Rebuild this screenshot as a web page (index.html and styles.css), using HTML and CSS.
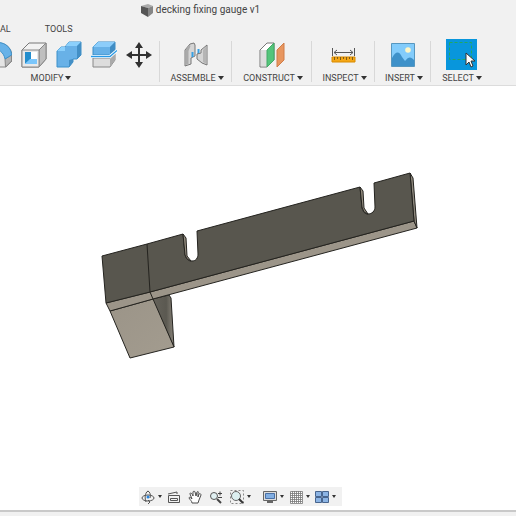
FILE: index.html
```html
<!DOCTYPE html>
<html lang="en">
<head>
<meta charset="utf-8">
<title>decking fixing gauge v1</title>
<link rel="stylesheet" href="styles.css">
</head>
<body>
<header class="header">
  <div class="title">
    <svg width="14" height="14" viewBox="0 0 14 14" aria-hidden="true"><path d="M1 3 8 1l5 2-5 2z" fill="#aaa"/><path d="M1 3l7 2v9l-7-4z" fill="#555"/><path d="M13 3 8 5v9l5-4z" fill="#858585"/></svg>
    <h1>decking fixing gauge v1</h1>
  </div>
  <nav class="tabs"><button>AL</button><button>TOOLS</button></nav>
  <div class="ribbon">
    <section class="group modify">
      <div class="icons">
        <button aria-label="Fillet"><svg width="26" height="28" viewBox="0 0 26 28"><path d="M1 8l8-6h5c8 1 12 7 12 13v5l-6 6H1z" fill="#e4e4e4" stroke="#888"/><path d="M19 18l6.500-4v6l-6 6z" fill="#b4b4b4" stroke="#888"/><path d="M4 7l8-5.500c8 0 13.500 6 13.500 12.500l-6.500 4C18 12 13 7 4 7z" fill="#67b2e8" stroke="#3b91cb"/></svg></button>
        <button aria-label="Shell"><svg width="26" height="28" viewBox="0 0 26 28"><path d="M1 9l7-7h17v16l-7 8H1z" fill="#f2f2f2" stroke="#777"/><path d="M18 9l7-7v16l-7 8z" fill="#bfbfbf" stroke="#888"/><path d="M1 9h17v17H1z" fill="#e9e9e9" stroke="#888"/><path d="M4 11h12v12H4z" fill="#fff"/><path d="M4 11h6v7l-6 5z" fill="#238dcc"/><path d="M4 23l5-5h7v5z" fill="#7bc6fb"/></svg></button>
        <button aria-label="Combine"><svg width="26" height="28" viewBox="0 0 26 28"><path d="M1 10l4-4h4l4-5h12v13l-4 4h-4v3l-4 5H1z" fill="#68b1e7" stroke="#3c91ca"/><path d="M1 10l4-4h4v4zM9 6l4-5h12l-4 4H10z" fill="#8bd0fc"/><path d="M21 5l4-4v13l-4 4zM13 19l4-1v3l-4 5z" fill="#438fc5"/></svg></button>
        <button aria-label="Split body"><svg width="26" height="28" viewBox="0 0 26 28"><path d="M2 17h17l5-6v8l-5 7H2z" fill="#ddd" stroke="#888"/><path d="M19 18l5-6v7l-5 7z" fill="#aaa"/><path d="M2 6l5-5h17v8l-5 5H2z" fill="#67b1e7" stroke="#3b8dc6"/><path d="M2 6l5-5h17l-5 5z" fill="#8ccdfa"/><path d="M19 6l5-5v8l-5 5z" fill="#408dc4"/><path d="M0 15.500h19l7-6" fill="none" stroke="#fff" stroke-width="3"/><path d="M0 15.500h19l7-6" fill="none" stroke="#2799e5" stroke-width="1.300"/></svg></button>
        <button aria-label="Move"><svg width="26" height="28" viewBox="0 0 26 28"><path d="M13 4v20M3 14h20" stroke="#333" stroke-width="2"/><path d="M13 1l4 6H9zM13 27l4-6H9zM0 14l6-4v8zM26 14l-6-4v8z" fill="#303030"/></svg></button>
      </div>
      <button class="label">MODIFY<i class="arrow"></i></button>
    </section>
    <section class="group assemble">
      <div class="icons"><button aria-label="Joint"><svg width="26" height="28" viewBox="0 0 26 28"><path d="M2 9l5-6 4-1 1 2v11l-4 2v6l-6 2z" fill="#d5d5d5" stroke="#777"/><path d="M2.500 9l4-5 1 1-2 5v13l-3 1z" fill="#aaa"/><path d="M9.500 11v5M15.500 8v5" stroke="#36a0e4" stroke-width="2"/><path d="M24 4v20l-5-2-5-4v-5l4-1V9z" fill="#d5d5d5" stroke="#777"/><path d="M20 9l3.500-4v18l-3.500-2z" fill="#b5b5b5"/></svg></button></div>
      <button class="label">ASSEMBLE<i class="arrow"></i></button>
    </section>
    <section class="group construct">
      <div class="icons"><button aria-label="Offset plane"><svg width="26" height="28" viewBox="0 0 26 28"><path d="M1 9l7-7h7v17l-7 7H1z" fill="#fff" stroke="#777"/><path d="M2 9h6v16H2z" fill="#ddd"/><path d="M8 9l7-7v17l-7 7z" fill="#54c57b" stroke="#42a966"/><path d="M18 9l7-7v17l-7 7z" fill="#e8965f" stroke="#d07d48"/></svg></button></div>
      <button class="label">CONSTRUCT<i class="arrow"></i></button>
    </section>
    <section class="group inspect">
      <div class="icons"><button aria-label="Measure"><svg width="26" height="28" viewBox="0 0 26 28"><path d="M1.500 7v8M23.500 7v8M3 11.500h19M6 9l-3 2.500L6 14M19 9l3 2.500-3 2.500" fill="none" stroke="#555"/><path d="M1 16h23v5H1z" fill="#f5a716" stroke="#d98b00"/><path d="M3.500 16v3M6.500 16v2M9.500 16v3M12.500 16v2M15.500 16v3M18.500 16v2M21.500 16v3" stroke="#815d14"/></svg></button></div>
      <button class="label">INSPECT<i class="arrow"></i></button>
    </section>
    <section class="group insert">
      <div class="icons"><button aria-label="Insert image"><svg width="26" height="28" viewBox="0 0 26 28"><path d="M1.500 2.500h23v23h-23z" fill="#83ccfb" stroke="#5797bf"/><path d="M2 17c4-7 7-7 10-1l3 4c4-5 6-4 9-1v6H2z" fill="#3e91c9"/><circle cx="18" cy="9" r="2.800" fill="#fff6c6"/></svg></button></div>
      <button class="label">INSERT<i class="arrow"></i></button>
    </section>
    <section class="group select">
      <div class="icons"><button aria-label="Select"><svg width="31" height="31" viewBox="0 0 31 31"><path d="M0 0h31v31H0z" fill="#0896dc"/><path d="M3.500 3.500h22v17h-22z" fill="none" stroke="#22a860" stroke-dasharray="3 2"/><path d="M20 14v12l3-3 2 5 2-1-2-5h4z" fill="#fff" stroke="#333"/></svg></button></div>
      <button class="label">SELECT<i class="arrow"></i></button>
    </section>
  </div>
</header>
<main class="canvas">
  <svg class="model" width="320" height="192" viewBox="98 170 320 192" role="img" aria-label="Decking fixing gauge">
    <defs>
      <linearGradient id="leg" x2="1" y2="1"><stop stop-color="#9b9488"/><stop offset="1" stop-color="#a39c8f"/></linearGradient>
      <linearGradient id="side"><stop stop-color="#66635b"/><stop offset=".65" stop-color="#5b5951"/><stop offset="1" stop-color="#89847a"/></linearGradient>
    </defs>
    <g stroke="#24231f" stroke-linejoin="round">
      <path d="M152 299l17-4 2 3 3 49z" fill="url(#side)"/>
      <path d="M110 311l43-12 21 48-44 11z" fill="url(#leg)"/>
      <path d="M106 303l44-11 264-71 3 7-264 71-43 12z" fill="#9c9589"/>
      <path d="M410 173l3 5 4 50-3-7z" fill="#8e887d"/>
      <path d="M102 256l45-12 36-10 2 20c1 5 3 7 7 7s6-3 6-7l-1-23 163-44 2 21c1 4 3 6 6 6 4 0 7-3 7-7l-1-24 36-10 4 48-264 71-44 11z" fill="#58564e"/>
      <path d="M183 234l3 4 1 18 4 5-4-2-2-4zM360 187l3 4 1 17 4 6-4-2-2-5z" fill="#928b7e"/>
      <path d="M147 244l3 48 3 7" fill="none"/>
    </g>
  </svg>
  <nav class="view-tools" aria-label="View">
    <button class="menu" aria-label="Orbit"><svg width="14" height="14" viewBox="0 0 14 14"><g fill="none" stroke="#555"><ellipse cx="7" cy="8" rx="6" ry="3"/><path d="M5 12c-2-6 0-10 2-11 2 1 3 4 2 7M5 3l2-2 2 2M7 10l2 2-2 2"/></g><circle cx="7" cy="7" r="1.500" fill="#2985df"/></svg><i class="arrow"></i></button>
    <button aria-label="Look at"><svg width="14" height="14" viewBox="0 0 14 14" fill="none" stroke="#555"><path d="M1.500 5.500h11v7h-11zM3.500 8.500h7v2h-7zM1 4l9-2v2"/></svg></button>
    <button aria-label="Pan"><svg width="14" height="14" viewBox="0 0 14 14"><path d="M4 13c0-2-2-3-3-5 0-1 1-1 3 1L2 4c0-2 2-1 3 2L5 2c0-1 2-1 2 0l1 4 1-4c1-1 2 0 1 1v4l1-3c1-1 2 0 2 1l-2 5-1 3z" fill="#fff" stroke="#4d4d4d"/></svg></button>
    <button aria-label="Zoom"><svg width="14" height="14" viewBox="0 0 14 14"><circle cx="5" cy="6" r="3.500" fill="#e1f0f2" stroke="#555"/><path d="M8 9l4 4" stroke="#444" stroke-width="2"/><path d="M9 3.500h4M11 1.500v4M9 7.500h4" stroke="#444"/></svg></button>
    <button class="menu" aria-label="Fit"><svg width="14" height="14" viewBox="0 0 14 14"><path d="M.5.500h13v13H.5z" fill="none" stroke="#888" stroke-dasharray="2 2"/><circle cx="6" cy="6" r="4.500" fill="#dceff0" stroke="#666"/><path d="M9 9l4 4" stroke="#333" stroke-width="2"/></svg><i class="arrow"></i></button>
    <button class="menu display" aria-label="Display settings"><svg width="14" height="14" viewBox="0 0 14 14"><path d="M.5 1.500h13v9H.5z" fill="#ddd" stroke="#666"/><path d="M2.500 3.500h9v5h-9z" fill="#81aee2" stroke="#4a70a5"/><path d="M4 12h6" stroke="#666" stroke-width="2"/></svg><i class="arrow"></i></button>
    <button class="menu" aria-label="Grid and snaps"><svg width="14" height="14" viewBox="0 0 14 14"><path d="M1.500 1.500h12v12h-12zM3.500 1v12M5.500 1v12M7.500 1v12M9.500 1v12M11.500 1v12M1 3.500h12M1 5.500h12M1 7.500h12M1 9.500h12M1 11.500h12" fill="#fff" stroke="#777" stroke-width=".8"/></svg><i class="arrow"></i></button>
    <button class="menu" aria-label="Viewports"><svg width="14" height="14" viewBox="0 0 14 14"><path d="M.5 1.500h6v5h-6zM7.500 1.500h6v5h-6zM.5 7.500h6v5h-6zM7.500 7.500h6v5h-6z" fill="#8cb4e4" stroke="#48658e"/></svg><i class="arrow"></i></button>
  </nav>
</main>
<footer class="footer"></footer>
</body>
</html>
```
FILE: styles.css
```css
* {
  box-sizing: border-box;
}

body {
  display: flex;
  flex-direction: column;
  min-height: 100vh;
  margin: 0;
  overflow-x: hidden;
  background: #fff;
  color: #444;
  font: 9px/12px Roboto, "Liberation Sans", sans-serif;
}

button {
  padding: 0;
  border: 0;
  background: none;
  color: inherit;
  font: inherit;
}

svg {
  display: block;
  flex: none;
}

.header {
  overflow: hidden;
  background: #f1f1f1;
  border-bottom: 1px solid #dcdcdc;
}

.title {
  display: flex;
  align-items: center;
  justify-content: center;
  gap: 2px;
  height: 18px;
  padding: 2px 116px 0 0;
}

.title h1 {
  margin: 0;
  font-size: 10px;
  font-weight: 400;
}

.tabs {
  display: flex;
  gap: 34px;
  padding-top: 5px;
}

.ribbon {
  display: flex;
  padding: 4px 0 1px;
}

.group {
  position: relative;
  display: flex;
  flex: none;
  flex-direction: column;
  align-items: center;
  height: 45px;
}

.group:not(:last-child)::after {
  position: absolute;
  top: 2px;
  right: 0;
  bottom: 2px;
  width: 1px;
  background: #d8d8d8;
  content: "";
}

.icons {
  display: flex;
  align-items: center;
  gap: 9px;
  height: 31px;
}

.label {
  display: flex;
  align-items: center;
  gap: 2px;
  margin-top: 2px;
  padding-left: 2px;
  white-space: nowrap;
}

.arrow {
  border: 3px solid transparent;
  border-top: 4px solid #333;
  border-bottom: 0;
}

.modify {
  width: 220px;
  margin-left: -60px;
}

.modify .icons {
  align-self: flex-end;
  margin-right: 8px;
}

.assemble {
  width: 72px;
}

.construct {
  width: 80px;
}

.inspect {
  width: 63px;
}

.insert {
  width: 56px;
}

.select {
  width: 60px;
}

.canvas {
  display: flex;
  flex: 1;
  flex-direction: column;
  align-items: center;
  justify-content: space-between;
  padding: 84px 0 4px;
}

.view-tools {
  display: flex;
  align-items: center;
  gap: 7px;
  height: 19px;
  margin-right: 35px;
  padding: 0 8px 0 2px;
  background: #f1f1f1;
}

.view-tools button {
  display: flex;
  align-items: center;
  gap: 3px;
}

.view-tools .menu {
  margin-right: -2px;
}

.view-tools .arrow {
  border-width: 3px 2px 0;
}

.view-tools .display {
  margin-left: 7px;
}

.footer {
  height: 6px;
  border-top: 2px solid #c9c9c9;
  background: #f1f1f1;
}
```
